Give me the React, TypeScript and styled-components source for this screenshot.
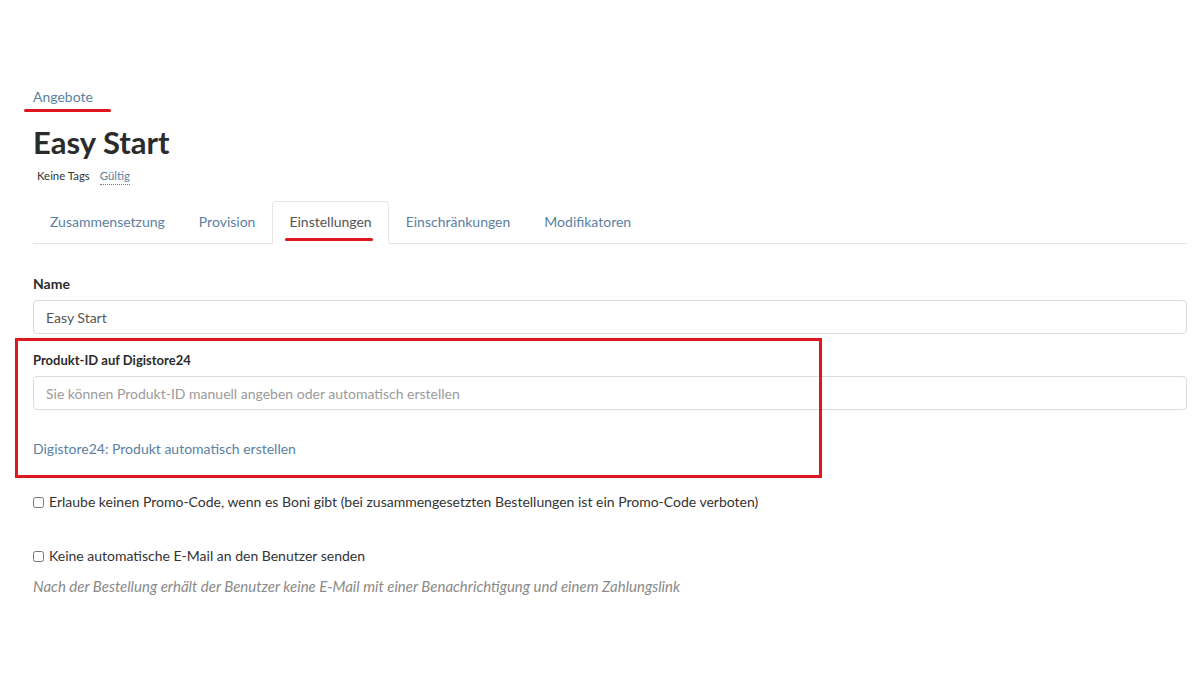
import React from "react";
import styled, { createGlobalStyle } from "styled-components";

const linkColor = "#5b7fa3";
const textColor = "#333333";
const borderColor = "#dcdcdc";
const markRed = "#e0161e";

const GlobalStyle = createGlobalStyle`
  html, body {
    margin: 0;
    padding: 0;
    background: #ffffff;
    font-family: Lato, "Open Sans", Arial, sans-serif;
    color: ${textColor};
  }
  * { box-sizing: border-box; }
`;

const Page = styled.div`
  position: relative;
  width: 1200px;
  height: 675px;
  padding: 86px 13px 0 33px;
  overflow: hidden;
`;

const Crumb = styled.a`
  position: relative;
  display: inline-block;
  font-size: 14px;
  color: ${linkColor};
  text-decoration: none;
  line-height: 20px;
`;

const Mark = styled.span<{ left: number; width: number; top: number }>`
  position: absolute;
  left: ${(p) => p.left}px;
  top: ${(p) => p.top}px;
  width: ${(p) => p.width}px;
  height: 3px;
  border-radius: 2px;
  background: ${markRed};
`;

const Title = styled.h1`
  margin: 16px 0 0;
  font-size: 31px;
  font-weight: 700;
  line-height: 38px;
  color: #2b2b2b;
`;

const TagRow = styled.div`
  display: flex;
  gap: 10px;
  margin: 7px 0 0 4px;
  font-size: 11.4px;
  line-height: 16px;
`;

const Tag = styled.span<{ link?: boolean }>`
  color: ${(p) => (p.link ? linkColor : textColor)};
  border-bottom: ${(p) => (p.link ? `1px dotted ${linkColor}` : "none")};
`;

const Tabs = styled.div`
  display: flex;
  margin-top: 16px;
  border-bottom: 1px solid #e6e6e6;
`;

const Tab = styled.div<{ active?: boolean }>`
  position: relative;
  padding: 10px 16px 12px;
  font-size: 14px;
  line-height: 19px;
  color: ${(p) => (p.active ? "#555" : linkColor)};
  border: 1px solid ${(p) => (p.active ? "#e6e6e6" : "transparent")};
  border-bottom-color: ${(p) => (p.active ? "#fff" : "transparent")};
  border-radius: 4px 4px 0 0;
  margin-bottom: -1px;
  background: ${(p) => (p.active ? "#fff" : "transparent")};
`;

const Field = styled.div`
  display: flex;
  flex-direction: column;
`;

const Label = styled.label<{ small?: boolean }>`
  font-size: ${(p) => (p.small ? 13 : 14)}px;
  font-weight: 700;
  line-height: 18px;
  color: #2b2b2b;
  margin-bottom: 7px;
`;

const Input = styled.input`
  height: 34px;
  width: 100%;
  padding: 0 12px;
  border: 1px solid ${borderColor};
  border-radius: 4px;
  font-family: inherit;
  font-size: 14px;
  color: #555;
  outline: none;
  &::placeholder {
    color: #9a9a9a;
  }
`;

const Form = styled.div`
  display: flex;
  flex-direction: column;
  margin-top: 31px;
`;

const Section = styled.div`
  position: relative;
  margin-top: 17px;
`;

const Highlight = styled.div`
  position: absolute;
  left: -18px;
  top: -13px;
  width: 807px;
  height: 140px;
  border: 3px solid ${markRed};
`;

const ActionLink = styled.a`
  display: block;
  margin-top: 30px;
  font-size: 14px;
  line-height: 18px;
  color: ${linkColor};
  text-decoration: none;
`;

const Check = styled.label<{ gap: number }>`
  display: flex;
  align-items: center;
  gap: 5px;
  margin-top: ${(p) => p.gap}px;
  font-size: 14px;
  line-height: 18px;
  color: ${textColor};
  input {
    margin: 0;
    width: 11px;
    height: 11px;
  }
`;

const Hint = styled.p`
  margin: 12px 0 0;
  font-size: 15px;
  font-style: italic;
  line-height: 18px;
  color: #8a8a8a;
`;

const tabs = ["Zusammensetzung", "Provision", "Einstellungen", "Einschränkungen", "Modifikatoren"];

export default function App() {
  return (
    <>
      <GlobalStyle />
      <Page>
        <Crumb href="#">
          Angebote
          <Mark left={-9} width={87} top={22} />
        </Crumb>
        <Title>Easy Start</Title>
        <TagRow>
          <Tag>Keine Tags</Tag>
          <Tag link>Gültig</Tag>
        </TagRow>
        <Tabs>
          {tabs.map((t) => (
            <Tab key={t} active={t === "Einstellungen"}>
              {t}
              {t === "Einstellungen" && <Mark left={12} width={88} top={36} />}
            </Tab>
          ))}
        </Tabs>
        <Form>
          <Field>
            <Label>Name</Label>
            <Input defaultValue="Easy Start" />
          </Field>
          <Section>
            <Highlight />
            <Field>
              <Label small>Produkt-ID auf Digistore24</Label>
              <Input placeholder="Sie können Produkt-ID manuell angeben oder automatisch erstellen" />
            </Field>
            <ActionLink href="#">Digistore24: Produkt automatisch erstellen</ActionLink>
          </Section>
          <Check gap={35}>
            <input type="checkbox" />
            Erlaube keinen Promo-Code, wenn es Boni gibt (bei zusammengesetzten Bestellungen ist ein Promo-Code verboten)
          </Check>
          <Check gap={36}>
            <input type="checkbox" />
            Keine automatische E-Mail an den Benutzer senden
          </Check>
          <Hint>Nach der Bestellung erhält der Benutzer keine E-Mail mit einer Benachrichtigung und einem Zahlungslink</Hint>
        </Form>
      </Page>
    </>
  );
}
